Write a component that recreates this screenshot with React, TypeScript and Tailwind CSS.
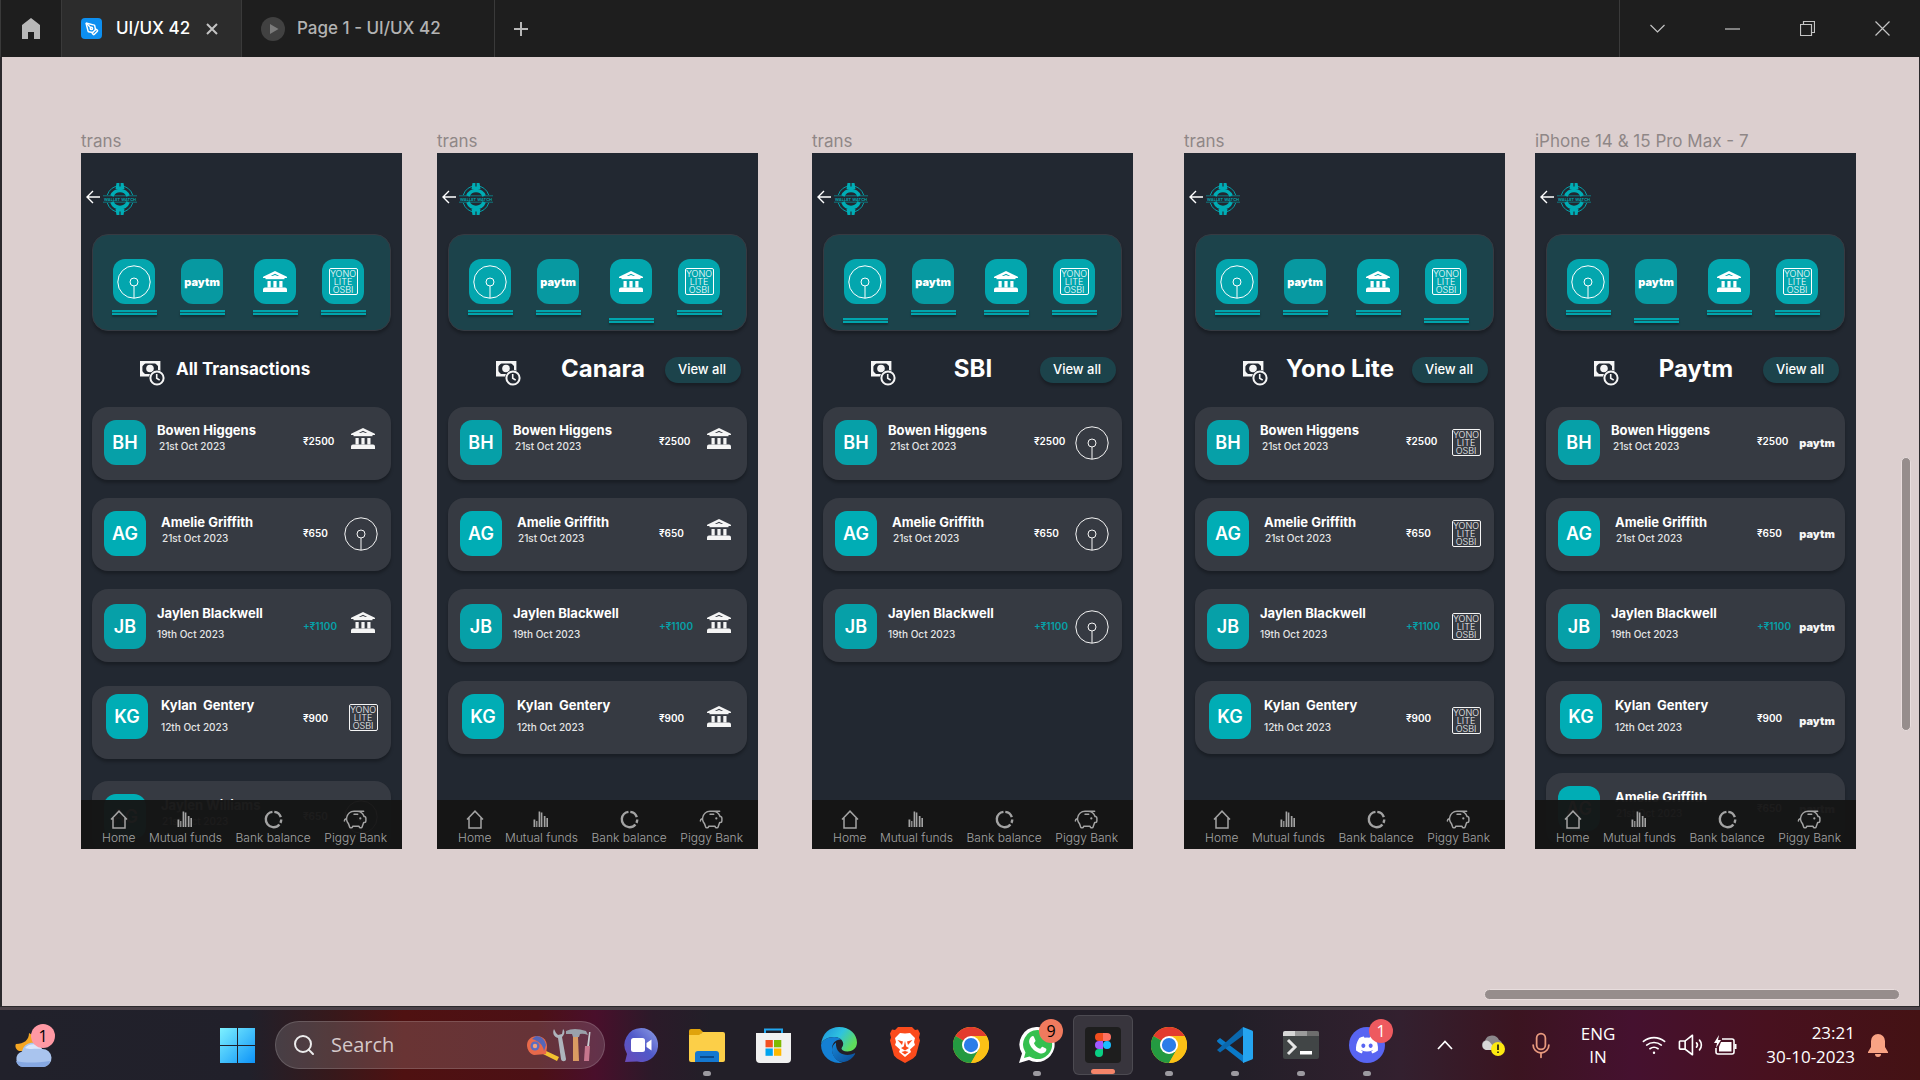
import React from "react";
import { PenTool, Search } from "lucide-react";
import { PiPiggyBank, PiMicrophone, PiWifiHigh, PiSpeakerHigh } from "react-icons/pi";
import { FaDiscord } from "react-icons/fa";

type Bank = "sbi" | "paytm" | "canara" | "yono";

type Entry = {
  id: string;
  initials: string;
  name: string;
  date: string;
  amount: string;
  card: string;
  avatar: string;
  text: string;
  dateStyle: string;
  amountStyle: string;
  slot: string;
};

const BH: Entry = {
  id: "bh",
  initials: "BH",
  name: "Bowen Higgens",
  date: "21st Oct 2023",
  amount: "₹2500",
  card: "pt-[13px] pl-3",
  avatar: "bg-[#06a0a8]",
  text: "pl-[11px] pt-px",
  dateStyle: "pl-0.5",
  amountStyle: "text-white pb-0.5",
  slot: "",
};
const AG: Entry = {
  id: "ag",
  initials: "AG",
  name: "Amelie Griffith",
  date: "21st Oct 2023",
  amount: "₹650",
  card: "pt-[13px] pl-3",
  avatar: "bg-[#00adb5]",
  text: "pl-[15px] pt-0.5",
  dateStyle: "pl-px",
  amountStyle: "text-white",
  slot: "",
};
const JB: Entry = {
  id: "jb",
  initials: "JB",
  name: "Jaylen Blackwell",
  date: "19th Oct 2023",
  amount: "+₹1100",
  card: "pt-[15px] pl-3",
  avatar: "bg-[#06a0a8]",
  text: "pl-[11px]",
  dateStyle: "pt-[5px]",
  amountStyle: "text-[#06a0a8]",
  slot: "",
};
const KG: Entry = {
  id: "kg",
  initials: "KG",
  name: "Kylan  Gentery",
  date: "12th Oct 2023",
  amount: "₹900",
  card: "mt-px pt-[13px] pl-3.5",
  avatar: "bg-[#00adb5]",
  text: "pl-[13px] pt-0.5",
  dateStyle: "pt-1.5",
  amountStyle: "text-white pt-1",
  slot: "mt-1",
};
const KG_HIGH: Entry = { ...KG, card: "mt-1.5 pt-2 pl-3.5", slot: "mt-px" };
const AG_LAST: Entry = { ...AG, id: "ag2", card: "mt-px pt-[13px] pl-3" };
const AG_LAST_LOW: Entry = { ...AG, id: "ag3", name: "Jaylen Williams", card: "mt-1 pt-[13px] pl-3" };

type Screen = {
  label: string;
  offset: string;
  title: string;
  titleStyle: string;
  viewAll: boolean;
  active?: Bank;
  rows: { entry: Entry; bank: Bank }[];
};

const LARGE = "flex-1 text-center text-[24px] leading-7 pb-0.5";

const SCREENS: Screen[] = [
  {
    label: "trans",
    offset: "ml-[79px]",
    title: "All Transactions",
    titleStyle: "pl-[11px] text-[17px]",
    viewAll: false,
    rows: [
      { entry: BH, bank: "canara" },
      { entry: AG, bank: "sbi" },
      { entry: JB, bank: "canara" },
      { entry: KG_HIGH, bank: "yono" },
      { entry: AG_LAST_LOW, bank: "sbi" },
    ],
  },
  {
    label: "trans",
    offset: "ml-[35px]",
    title: "Canara",
    titleStyle: LARGE + " pl-5",
    viewAll: true,
    active: "canara",
    rows: [BH, AG, JB, KG].map((entry) => ({ entry, bank: "canara" as Bank })),
  },
  {
    label: "trans",
    offset: "ml-[54px]",
    title: "SBI",
    titleStyle: LARGE + " pl-2.5",
    viewAll: true,
    active: "sbi",
    rows: [BH, AG, JB].map((entry) => ({ entry, bank: "sbi" as Bank })),
  },
  {
    label: "trans",
    offset: "ml-[51px]",
    title: "Yono Lite",
    titleStyle: LARGE,
    viewAll: true,
    active: "yono",
    rows: [BH, AG, JB, KG].map((entry) => ({ entry, bank: "yono" as Bank })),
  },
  {
    label: "iPhone 14 & 15 Pro Max - 7",
    offset: "ml-[30px]",
    title: "Paytm",
    titleStyle: LARGE + " pl-2.5",
    viewAll: true,
    active: "paytm",
    rows: [BH, AG, JB, KG, AG_LAST].map((entry) => ({ entry, bank: "paytm" as Bank })),
  },
];

/* ---------- bank marks ---------- */

function SbiMark() {
  return (
    <svg viewBox="0 0 34 34" className="size-[34px] shrink-0" fill="none" stroke="currentColor" strokeWidth="1">
      <circle cx="17" cy="17" r="16.2" />
      <circle cx="17" cy="17" r="4" />
      <path d="M17 21v12" />
    </svg>
  );
}

function BankMark() {
  return (
    <svg viewBox="0 0 24 21" className="h-[21px] w-6" fill="currentColor">
      <path
        fillRule="evenodd"
        d="M11 .4a2 2 0 0 1 2 0l10.400 5.200c.6.3.6.6.6 1.400H0c0-.8 0-1.100.6-1.400zM12 2.700 7.800 5h1.700L12 3.900 14.500 5h1.700z"
      />
      <rect x="2.500" y="6.500" width="19" height="1.700" />
      <rect x="4.500" y="10" width="3.200" height="6.500" />
      <rect x="10.400" y="10" width="3.200" height="6.500" />
      <rect x="16.300" y="10" width="3.200" height="6.500" />
      <path d="M2 16.500h20a2 2 0 0 1 2 2V21H0v-2.500a2 2 0 0 1 2-2z" />
    </svg>
  );
}

function YonoMark() {
  return (
    <span className="flex h-[27px] w-[29px] flex-col items-center justify-center rounded-xs border border-current text-[9px] leading-[8px] font-light">
      <span>YONO</span>
      <span>LITE</span>
      <span>OSBI</span>
    </span>
  );
}

function PaytmMark() {
  return <span className="text-[11px] leading-3 font-black">paytm</span>;
}

function Mark({ bank }: { bank: Bank }) {
  if (bank === "sbi") return <SbiMark />;
  if (bank === "canara") return <BankMark />;
  if (bank === "yono") return <YonoMark />;
  return <PaytmMark />;
}

/* ---------- phone screen ---------- */

function WatchLogo() {
  return (
    <svg viewBox="0 0 34 32" className="h-8 w-[34px]" fill="none" stroke="#00adb5">
      <path d="M4.300 12a13.300 13.300 0 0 1 25.400 0M4.300 20a13.300 13.300 0 0 0 25.400 0" strokeWidth="0.900" />
      <path d="M8.900 13a8.700 8.700 0 0 1 16.200 0M8.900 19a8.700 8.700 0 0 0 16.200 0" strokeWidth="3.600" />
      <path d="M12.500 6 13.500 0h7l1 6zM12.500 26l1 6h7l1-6z" fill="#00adb5" stroke="none" />
      <path d="M17 0v3.500M17 28.500V32" stroke="#222831" strokeWidth="1.200" />
      <path d="M0 12.800h34M0 19.200h34" strokeWidth="0.600" />
      <text x="17" y="17.600" textAnchor="middle" fontSize="4" fontWeight="600" fill="#00adb5" stroke="none">
        WALLET WATCH
      </text>
    </svg>
  );
}

function CashClock() {
  return (
    <svg viewBox="0 0 25 25" className="size-[25px] shrink-0" fill="none">
      <path d="M1.200 1.200h18v13h-18z" stroke="#f5f5f5" strokeWidth="2.400" />
      <path d="M2 2h3.500L2 5.500zM18.500 2H15l3.500 3.500zM2 13.500h3.500L2 10z" fill="#f5f5f5" />
      <circle cx="10" cy="7.500" r="3.800" fill="#f5f5f5" />
      <circle cx="17" cy="17" r="8" fill="#222831" />
      <circle cx="17" cy="17" r="6.600" stroke="#f5f5f5" strokeWidth="2" />
      <path d="M16.700 13v4.200l3 2" stroke="#f5f5f5" strokeWidth="1.600" />
    </svg>
  );
}

function Underline({ active }: { active: boolean }) {
  return (
    <span
      className={
        "block h-[5px] w-[45px] border-y-2 border-[#00a5ad] bg-[#14565d] shadow-[0_2px_2px_rgba(0,0,0,0.3)] " +
        (active ? "mt-3.5" : "mt-1.5")
      }
    />
  );
}

const TILES: { bank: Bank; name: string; gap: string; fill: string }[] = [
  { bank: "sbi", name: "SBI", gap: "", fill: "bg-[#03a6ae]" },
  { bank: "paytm", name: "Paytm", gap: "ml-[22px]", fill: "bg-[#0799a1]" },
  { bank: "canara", name: "Canara", gap: "ml-[27px]", fill: "bg-[#03a6ae]" },
  { bank: "yono", name: "Yono Lite", gap: "ml-[22px]", fill: "bg-[#03a6ae]" },
];

function NavIcon({ name }: { name: string }) {
  if (name === "Home")
    return (
      <svg viewBox="0 0 18 19" className="h-[19px] w-[18px]" fill="none" stroke="currentColor" strokeWidth="1.500">
        <path d="M1 9.500 9 1.200l8 8.300M3 8v10h12V8" />
      </svg>
    );
  if (name === "Mutual funds")
    return (
      <svg viewBox="0 0 16 19" className="h-[19px] w-4" fill="currentColor">
        <path d="M.5 9.500h1.800v7.500H.5zM3.200 11h1.200v6H3.200zM5.600 1.500h1.600V17H5.600zM7.800 2.500h1.600V17H7.800zM10.800 6h1.700v11h-1.700zM13.400 8H15v9h-1.600z" />
      </svg>
    );
  if (name === "Bank balance")
    return (
      <svg viewBox="0 0 19 19" className="size-[19px]" fill="none" stroke="currentColor" strokeWidth="2.400">
        <circle
          cx="9.500"
          cy="9.500"
          r="7.700"
          pathLength="360"
          strokeDasharray="66 18 26 14 222 14"
          transform="rotate(-84 9.500 9.500)"
        />
      </svg>
    );
  return <PiPiggyBank className="h-[19px] w-[23px] scale-125" />;
}

function Card({ entry, bank }: { entry: Entry; bank: Bank }) {
  return (
    <li
      className={
        "flex h-[73px] items-start rounded-[16px] bg-[#363a42] pr-2 shadow-[0_3px_3px_rgba(0,0,0,0.25)] " + entry.card
      }
    >
      <span
        className={
          "flex h-[45px] w-[42px] shrink-0 items-center justify-center rounded-[12px] text-[18px] font-semibold text-white " +
          entry.avatar
        }
      >
        {entry.initials}
      </span>
      <div className={"min-w-0 flex-1 " + entry.text}>
        <h3 className="text-[13px] leading-[18px] font-bold whitespace-pre text-white">{entry.name}</h3>
        <p className={"text-[10px] leading-[14px] font-medium whitespace-nowrap text-[#e4e5e6] " + entry.dateStyle}>
          {entry.date}
        </p>
      </div>
      <span
        className={
          "flex h-[45px] w-10 shrink-0 items-center text-[10px] font-semibold whitespace-nowrap " + entry.amountStyle
        }
      >
        {entry.amount}
      </span>
      <span
        className={
          "flex h-[45px] w-10 shrink-0 items-center justify-center text-[#f5f5f5] " +
          entry.slot +
          (bank === "canara" ? " pb-2" : "") +
          (bank === "sbi" ? " pr-1" : "")
        }
      >
        <Mark bank={bank} />
      </span>
    </li>
  );
}

function PhoneScreen({ screen }: { screen: Screen }) {
  return (
    <section className={"w-[321px] shrink-0 " + screen.offset}>
      <h2 className="text-[17px] leading-[24px] whitespace-nowrap text-[#8f8787]">{screen.label}</h2>
      <div className="relative h-[696px] overflow-hidden bg-[#222831] px-[11px] pt-[30px]">
        <header className="flex h-8 items-center">
          <button aria-label="Back" className="-ml-1.5 pb-1 text-white">
            <svg viewBox="0 0 14 14" className="size-3.5" fill="none" stroke="currentColor" strokeWidth="1.400">
              <path d="M14 7H1M7 1 1 7l6 6" />
            </svg>
          </button>
          <span className="ml-[3px]">
            <WatchLogo />
          </span>
        </header>

        <div className="mt-[19px] flex h-[97px] rounded-[16px] border border-[#363a42] bg-[#1c434b] pt-6 pl-[18px] shadow-[0_3px_3px_rgba(0,0,0,0.25)]">
          {TILES.map((tile) => (
            <button
              key={tile.bank}
              aria-label={tile.name}
              className={"flex w-[46px] shrink-0 flex-col items-center text-white " + tile.gap}
            >
              <span className={"flex h-[45px] w-[42px] items-center justify-center rounded-[12px] " + tile.fill}>
                <Mark bank={tile.bank} />
              </span>
              <Underline active={screen.active === tile.bank} />
            </button>
          ))}
        </div>

        <div className="mt-6 flex h-[30px] items-center pr-1.5 pl-12">
          <span className="mt-1.5">
            <CashClock />
          </span>
          <h2 className={"font-bold whitespace-nowrap text-white " + screen.titleStyle}>{screen.title}</h2>
          {screen.viewAll && (
            <button className="h-[26px] w-[76px] shrink-0 rounded-full bg-[#1c434b] pr-0.5 text-[13px] font-medium text-white shadow-[0_3px_3px_rgba(0,0,0,0.25)]">
              View all
            </button>
          )}
        </div>

        <ul className="mt-[22px] flex flex-col gap-[18px]">
          {screen.rows.map((row) => (
            <Card key={row.entry.id} entry={row.entry} bank={row.bank} />
          ))}
        </ul>

        <nav className="absolute inset-x-0 bottom-0 flex h-[49px] items-start justify-between bg-[#151515]/97 pt-2.5 pr-[15px] pl-[21px] text-[#a3a3a3]">
          {["Home", "Mutual funds", "Bank balance", "Piggy Bank"].map((name) => (
            <a key={name} href="#" className="flex flex-col items-center text-[12px] leading-[18px] font-light">
              <NavIcon name={name} />
              {name}
            </a>
          ))}
        </nav>
      </div>
    </section>
  );
}

/* ---------- window title bar ---------- */

function TitleBar() {
  return (
    <header className="flex h-[57px] shrink-0 items-stretch border-l border-[#3a3a3a] bg-[#1e1e1e]">
      <button aria-label="Home" className="flex w-[60px] items-center justify-center text-[#b8b8b8]">
        <svg viewBox="0 0 18 21" className="h-[21px] w-[18px]" fill="currentColor">
          <path d="M9 0 0 7v14h6v-7h6v7h6V7z" />
        </svg>
      </button>
      <div className="flex w-[181px] items-center border-x border-[#3a3a3a] bg-[#2c2c2c] pl-[19px]">
        <span className="flex size-[21px] items-center justify-center rounded-sm bg-[#0d8ff0] text-white">
          <PenTool className="size-3.5" strokeWidth={2.5} />
        </span>
        <span className="ml-3.5 text-[17px] font-medium whitespace-nowrap text-white">UI/UX 42</span>
        <button aria-label="Close tab" className="ml-4 text-[#c4c4c4]">
          <svg viewBox="0 0 12 12" className="size-3" fill="none" stroke="currentColor" strokeWidth="2">
            <path d="m1 1 10 10M11 1 1 11" />
          </svg>
        </button>
      </div>
      <div className="flex w-[253px] items-center border-r border-[#3a3a3a] pl-[19px]">
        <svg viewBox="0 0 24 24" className="size-6">
          <circle cx="12" cy="12" r="12" fill="#414141" />
          <path d="M9 7v10l8.500-5z" fill="#7b7b7b" />
        </svg>
        <span className="ml-3 text-[17px] font-medium whitespace-nowrap text-[#b3b3b3]">Page 1 - UI/UX 42</span>
      </div>
      <button aria-label="New tab" className="flex w-[51px] items-center justify-center text-[#b8b8b8]">
        <svg viewBox="0 0 14 14" className="size-3.5" fill="none" stroke="currentColor" strokeWidth="2">
          <path d="M7 0v14M0 7h14" />
        </svg>
      </button>
      <div className="ml-auto flex border-l border-[#3a3a3a] text-[#c4c4c4]">
        {[
          ["Tab list", "m.5 4 7 7 7-7"],
          ["Minimize", "M0 8h15"],
          ["Restore", "M.5 3.500h11v11H.5zM3.500 3V.5h11v11H12"],
          ["Close", "m.5.5 14 14M14.500.5l-14 14"],
        ].map(([name, d]) => (
          <button key={name} aria-label={name} className="flex w-[75px] items-center justify-center">
            <svg viewBox="0 0 15 15" className="size-[15px]" fill="none" stroke="currentColor" strokeWidth="1.200">
              <path d={d} />
            </svg>
          </button>
        ))}
      </div>
    </header>
  );
}

/* ---------- taskbar ---------- */

function ChromeIcon() {
  return (
    <svg viewBox="0 0 48 48" className="size-9">
      <circle cx="24" cy="24" r="24" fill="#fbc116" />
      <path d="M24 24 3.200 12A24 24 0 0 1 44.800 12z" fill="#e33b2e" />
      <path d="M3.200 12A24 24 0 0 0 24 48l10.400-18L24 24z" fill="#249a41" />
      <path d="M24 12h20.800A24 24 0 0 1 24 48l10.400-18z" fill="#fbc116" />
      <circle cx="24" cy="24" r="12" fill="#fff" />
      <circle cx="24" cy="24" r="9.500" fill="#2b7de9" />
    </svg>
  );
}

function EdgeIcon() {
  return (
    <svg viewBox="0 0 36 36" className="size-9">
      <defs>
        <linearGradient id="edgeTop" x1="0" y1="0" x2="1" y2="0.500">
          <stop offset="0" stopColor="#1b8fdc" />
          <stop offset="0.550" stopColor="#2fc3df" />
          <stop offset="1" stopColor="#5fdc5b" />
        </linearGradient>
        <linearGradient id="edgeLow" x1="0" y1="0" x2="1" y2="1">
          <stop offset="0" stopColor="#1587d8" />
          <stop offset="1" stopColor="#0c4a94" />
        </linearGradient>
      </defs>
      <path
        d="M0 18C1 6 9 0 18 0c11 0 18 7.500 18 15.500 0 6-5 9-9.500 9-4 0-6-1.500-6-3 0-1.200 1.700-1.800 1.700-4.800 0-3.500-4-6.700-9-6.700C6.500 10 1 13 0 18z"
        fill="url(#edgeTop)"
      />
      <path d="M0 18C1 13 6.500 10 13.200 10c3 0 5.500 1.100 7 2.600C14 12.500 11 17 11 22c0 6.500 4.500 12.500 11 13.500A18 18 0 0 1 0 18z" fill="#1480d4" />
      <path d="M15 15.500c-3 2-4 5-4 7.500 0 6 5 12.600 12 12 5-.8 8.600-3.600 11-7.700.5-.9-.3-1.200-1-.8-6 3-19 2-18-11z" fill="url(#edgeLow)" />
    </svg>
  );
}

function ToolsArt() {
  return (
    <svg viewBox="0 0 66 34" className="h-[34px] w-[66px]">
      <path d="M17 22l15 7-2 4-14-7z" fill="#f2c230" />
      <path d="M10 8c7 0 10 5 10 11l-1 7-12 1c-4-1-7-5-7-10S4 8 10 8z" fill="#e8694a" />
      <path d="M9 8c6 0 9 4 10 9l-2 6c-1-6-5-10-12-12z" fill="#5566b8" />
      <circle cx="8" cy="18" r="4.500" fill="#5b6cc0" />
      <circle cx="8" cy="18" r="2.200" fill="#f0a27c" />
      <path d="M27 1c-2 4 0 8 4 9l3 21c.5 3 5 3 5 0L35 9c3-3 3-6 1-8l-1 5-4 1-2-2z" fill="#aeb4bc" />
      <path d="M39 3q8-4 20 0l2 4q-5-2-8-1l-1 3h-6l-1-3h-6z" fill="#9aa1aa" />
      <path d="M46 9h5l1 24h-6z" fill="#d99b62" />
      <path d="M62 4h1.500L62 19h-2z" fill="#c9cdd2" />
      <path d="M58 18h5l-1 15h-5z" fill="#c6768d" />
    </svg>
  );
}

function Badge({ children, tone }: { children: React.ReactNode; tone: string }) {
  return (
    <span
      className={
        "absolute -top-2 -right-2 flex size-6 items-center justify-center rounded-full text-[16px] leading-none " + tone
      }
    >
      {children}
    </span>
  );
}

type AppEntry = { name: string; icon: React.ReactNode; running?: boolean; current?: boolean };

const APPS: AppEntry[] = [
  {
    name: "Chat",
    icon: (
      <svg viewBox="0 0 34 34" className="size-[34px]">
        <defs>
          <linearGradient id="chatFill" x1="0" y1="1" x2="1" y2="0">
            <stop offset="0" stopColor="#6b4bb8" />
            <stop offset="0.500" stopColor="#5059c9" />
            <stop offset="1" stopColor="#8fa0e6" />
          </linearGradient>
        </defs>
        <path d="M17 0a17 17 0 1 1-4 33.500L1 34l2-8A17 17 0 0 1 17 0z" fill="url(#chatFill)" />
        <rect x="7" y="10" width="14" height="14" rx="2.500" fill="#fff" />
        <path d="m22.500 15 5-3.500v11l-5-3.500z" fill="#fff" />
      </svg>
    ),
  },
  {
    name: "File Explorer",
    running: true,
    icon: (
      <svg viewBox="0 0 36 33" className="h-[33px] w-9">
        <path d="M0 2a2 2 0 0 1 2-2h9l4 4h-3v8H0z" fill="#e0a30c" />
        <path d="M0 6h10l4-3h20a2 2 0 0 1 2 2v26a2 2 0 0 1-2 2H2a2 2 0 0 1-2-2z" fill="#fccf48" />
        <path d="M6 33V25a3 3 0 0 1 3-3h18a3 3 0 0 1 3 3v8z" fill="#1478d0" />
        <path d="M11 28h14" stroke="#0b4a8a" strokeWidth="2" />
      </svg>
    ),
  },
  {
    name: "Microsoft Store",
    icon: (
      <svg viewBox="0 0 35 35" className="size-[35px]">
        <path d="M9 6V1.500h17V6" fill="none" stroke="#22a7f0" strokeWidth="2" />
        <path d="M0 5h35v26a4 4 0 0 1-4 4H4a4 4 0 0 1-4-4z" fill="#f1f1f1" />
        <path d="M9.500 12h7.300v7.300H9.500z" fill="#f25022" />
        <path d="M18 12h7.300v7.300H18z" fill="#7fba00" />
        <path d="M9.500 20.500h7.300v7.300H9.500z" fill="#00a4ef" />
        <path d="M18 20.500h7.300v7.300H18z" fill="#ffb900" />
      </svg>
    ),
  },
  { name: "Edge", icon: <EdgeIcon /> },
  {
    name: "Brave",
    icon: (
      <svg viewBox="0 0 30 36" className="h-9 w-[30px]">
        <path d="M8 0h14l3 3 3-.5 2 4-1 4 1 3-4 15-3 3-8 4.500L7 31.500l-3-3L0 13.500l1-3-1-4 2-4 3 .5z" fill="#fb4b1c" />
        <path d="M15 6.500 20 6l5 5-1 4 1 3-5 4.500 1 2.500-6 5-6-5 1-2.500L5 18l1-3-1-4 5-5z" fill="#fff" />
        <path
          d="m7.500 13 5.500 1.500-1 3.500zM22.500 13 17 14.500l1 3.500zM15 14l1.200 5.500L19 21l-4 2.500L11 21l2.800-1.500zM11.500 25l3.500-1 3.500 1-3.500 2.500z"
          fill="#fb4b1c"
        />
      </svg>
    ),
  },
  { name: "Chrome", icon: <ChromeIcon /> },
  {
    name: "WhatsApp",
    running: true,
    icon: (
      <span className="relative grid size-9 place-items-center">
        <svg viewBox="0 0 36 36" className="size-9">
          <path d="M18.500 0a17.500 17.500 0 1 1-8.500 33L0 36l3-9.500A17.500 17.500 0 0 1 18.500 0z" fill="#fff" />
          <path d="M18.500 3a14.500 14.500 0 1 1-8 26.500L5 31l1.500-5.500A14.500 14.500 0 0 1 18.500 3z" fill="#35c04f" />
          <path d="M12 10c2-1.500 2.500-1 3.200.5l1.300 3c.3.800-1.500 2.200-1.500 2.700 1.200 2.800 3.200 4.600 6 5.600.7.200 1.700-2.200 2.500-2l3.400 1.700c.8.400.5 1.400.1 2.500-1 2.200-4 3-6.500 2.200C14.800 24.200 11.500 20 10.300 16c-.6-2.300.2-4.600 1.700-6z" fill="#fff" />
        </svg>
        <Badge tone="bg-[#f07a5e] text-black">9</Badge>
      </span>
    ),
  },
  {
    name: "Figma",
    current: true,
    icon: (
      <span className="flex size-9 items-center justify-center rounded-sm bg-[#1e1e1e]">
        <svg viewBox="0 0 16 24" className="h-6 w-4">
          <path d="M8 0v8H4a4 4 0 0 1 0-8z" fill="#f24e1e" />
          <path d="M8 0h4a4 4 0 0 1 0 8H8z" fill="#ff7262" />
          <path d="M8 8v8H4a4 4 0 0 1 0-8z" fill="#a259ff" />
          <circle cx="12" cy="12" r="4" fill="#1abcfe" />
          <path d="M8 16v4a4 4 0 1 1-4-4z" fill="#0acf83" />
        </svg>
      </span>
    ),
  },
  { name: "Chrome, second profile", running: true, icon: <ChromeIcon /> },
  {
    name: "Visual Studio Code",
    running: true,
    icon: (
      <svg viewBox="0 0 36 36" className="size-9">
        <path d="M0 13.500 3 11l24 18v7L1 15.500c-.8-.6-1-1.200-1-2z" fill="#0a7ac8" />
        <path d="M0 23 26 0v8.500L3 25.500z" fill="#0a68ae" />
        <path d="M26 0l9 3.500c.7.300 1 .8 1 1.500v26c0 .7-.3 1.200-1 1.500L26 36z" fill="#25a5f0" />
      </svg>
    ),
  },
  {
    name: "Terminal",
    running: true,
    icon: (
      <svg viewBox="0 0 36 28" className="h-7 w-9">
        <rect width="36" height="28" rx="2" fill="#414546" />
        <path d="M0 5V2a2 2 0 0 1 2-2h10v5z" fill="#d6d6d6" />
        <path d="M12 0h12v5H12z" fill="#9b9b9b" />
        <path d="M24 0h10a2 2 0 0 1 2 2v3H24z" fill="#6d6d6d" />
        <path d="m5 9 7 7-7 7" fill="none" stroke="#e6e6e6" strokeWidth="3" />
        <path d="M17 20h12v3.500H17z" fill="#fff" />
      </svg>
    ),
  },
  {
    name: "Discord",
    running: true,
    icon: (
      <span className="relative flex size-9 items-center justify-center rounded-full bg-[#5865f2] text-white">
        <FaDiscord className="size-6" />
        <Badge tone="bg-[#ee5a5f] text-white">1</Badge>
      </span>
    ),
  },
];

function Taskbar() {
  return (
    <footer className="flex h-[73px] shrink-0 items-center border-t-3 border-[#4b4148] bg-[linear-gradient(90deg,#21212b_0%,#21202a_13%,#35191c_17%,#4f1111_21%,#4c1015_28%,#490f2b_31%,#2b1a29_34%,#221f28_37%,#221f28_64%,#33202f_73%,#3b1420_79%,#45112f_85%,#48111f_92%,#441214_100%)] [font-family:'Open_Sans',sans-serif]">
      <button aria-label="Weather" className="relative ml-[15px] h-[43px] w-10">
        <svg viewBox="0 0 40 43" className="h-[43px] w-10">
          <path d="M14 9c7 3 9 13 2 18H4C0 25 0 21 1 20c8 0 13-4 13-11z" fill="#f5a623" />
          <path d="M8 43a8 8 0 0 1-1-15.500 10.500 10.500 0 0 1 20-2.500A9 9 0 0 1 28 43z" fill="#a9c4ee" />
          <path d="M8 43a8 8 0 0 1-7-6c10 2 18 2 34 0 0 0-1 6-7 6z" fill="#86a8e2" />
          <path d="M10 24a10.500 10.500 0 0 1 17 1c-6-1-11 1-17-1z" fill="#dbe7fb" />
        </svg>
        <span className="absolute top-0 right-0 flex size-6 items-center justify-center rounded-full bg-[#ff99a4] text-[16px] leading-none text-black">
          1
        </span>
      </button>

      <button aria-label="Start" className="ml-[165px]">
        <svg viewBox="0 0 35 35" className="size-[35px]">
          <defs>
            <linearGradient id="startFill" gradientUnits="userSpaceOnUse" x1="0" y1="0" x2="35" y2="35">
              <stop offset="0" stopColor="#7df1ff" />
              <stop offset="1" stopColor="#0d93f8" />
            </linearGradient>
          </defs>
          <path d="M0 0h17v17H0zM18 0h17v17H18zM0 18h17v17H0zM18 18h17v17H18z" fill="url(#startFill)" />
        </svg>
      </button>

      <label className="ml-5 flex h-12 w-[330px] items-center rounded-full border border-white/15 bg-white/15 pr-[11px] pl-4">
        <Search className="size-6 shrink-0 text-[#ececec]" strokeWidth={2} />
        <input
          type="text"
          aria-label="Search"
          placeholder="Search"
          className="ml-[15px] min-w-0 flex-1 bg-transparent text-[20px] text-white outline-none placeholder:text-[#d5c9ca]"
        />
        <ToolsArt />
      </label>

      <div className="ml-[3px] flex">
        {APPS.map((app) => (
          <button
            key={app.name}
            aria-label={app.name}
            className={
              "relative mx-[3px] flex h-[60px] w-[60px] items-center justify-center rounded-md " +
              (app.current ? "border border-white/10 bg-white/10" : "")
            }
          >
            {app.icon}
            {app.running && <span className="absolute -bottom-px h-[5px] w-2 rounded-full bg-[#9c9aa0]" />}
            {app.current && <span className="absolute bottom-0 h-[5px] w-6 rounded-full bg-[#f5856a]" />}
          </button>
        ))}
      </div>

      <div className="ml-auto flex items-center text-white">
        <button aria-label="Show hidden icons">
          <svg viewBox="0 0 16 10" className="h-2.5 w-4" fill="none" stroke="currentColor" strokeWidth="1.700">
            <path d="m1 9 7-7.500L15 9" />
          </svg>
        </button>
        <button aria-label="OneDrive" className="ml-7">
          <svg viewBox="0 0 24 21" className="h-[21px] w-6">
            <path d="M5 15a5 5 0 0 1-1-9.500A7.500 7.500 0 0 1 18 5c3 1 4 4 3 10z" fill="#8b878b" />
            <path d="M5 15a5 5 0 0 1 0-9.500c3 0 5 2 9 9.500z" fill="#d8d8d8" />
            <circle cx="17" cy="14" r="7" fill="#fde910" />
            <path d="M16.200 9.500h1.600v5.500h-1.600zM16.200 16.500h1.600V18h-1.600z" fill="#111" />
          </svg>
        </button>
        <button aria-label="Microphone" className="ml-[22px] text-[#e99a7e]">
          <PiMicrophone className="size-7" />
        </button>
        <button aria-label="Language" className="ml-5 w-[46px] text-center text-[17px] leading-[23px]">
          ENG
          <br />
          IN
        </button>
        <button aria-label="Network, sound and battery" className="ml-5 flex items-center gap-2.5">
          <PiWifiHigh className="size-[26px]" />
          <PiSpeakerHigh className="size-[26px]" />
          <svg viewBox="0 0 24 20" className="h-5 w-6" fill="none" stroke="currentColor" strokeWidth="1.600">
            <path d="M9 4h10a2 2 0 0 1 2 2v11a2 2 0 0 1-2 2H5a2 2 0 0 1-2-2v-4" />
            <path d="M8 7h10.500v9.500H6V12z" fill="currentColor" stroke="none" />
            <path d="M22.500 9v5" strokeWidth="2" />
            <path d="M6 0 1 8h3l-1 5 5-8H5z" fill="currentColor" stroke="none" />
          </svg>
        </button>
        <button aria-label="Date and time" className="ml-4 w-[102px] text-right text-[17px] leading-6">
          23:21
          <br />
          30-10-2023
        </button>
        <button aria-label="Notifications" className="mr-8 ml-[13px] text-[#f9a384]">
          <svg viewBox="0 0 20 23" className="h-[23px] w-5" fill="currentColor">
            <path d="M10 0a7 7 0 0 1 7 7v6l3 5v1H0v-1l3-5V7a7 7 0 0 1 7-7zM7 20h6a3 3 0 0 1-6 0z" />
          </svg>
        </button>
      </div>
    </footer>
  );
}

export default function App() {
  return (
    <div className="flex h-screen flex-col overflow-hidden [font-family:Inter,sans-serif]">
      <TitleBar />
      <main className="relative flex min-h-0 flex-1 items-start overflow-hidden border-r border-b border-l-2 border-[#2b292c] bg-[#dccfcf] pt-[72px]">
        {SCREENS.map((screen) => (
          <PhoneScreen key={screen.title} screen={screen} />
        ))}
        <span className="absolute top-[400px] right-2 h-[274px] w-[10px] rounded-full border border-[#e8dddd] bg-[#968d8c]" />
        <span className="absolute right-[19px] bottom-1.5 h-[11px] w-[416px] rounded-full border border-[#e8dddd] bg-[#968d8c]" />
      </main>
      <Taskbar />
    </div>
  );
}
